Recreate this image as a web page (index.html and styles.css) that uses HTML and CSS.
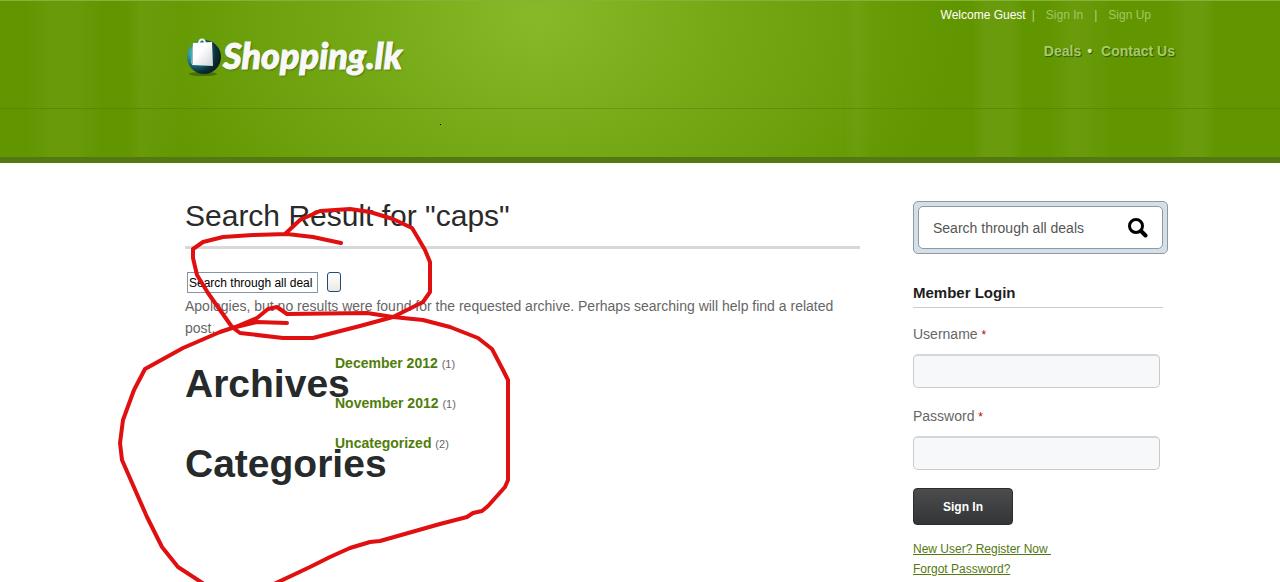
FILE: index.html
```html
<!DOCTYPE html>
<html lang="en">
<head>
    <meta charset="UTF-8">
    <meta name="viewport" content="width=device-width, initial-scale=1.0">
    <title>Shopping.lk - Search Result</title>
    <link rel="stylesheet" href="styles.css">
</head>
<body>
<header class="header">
    <div class="container header-inner">
        <a href="#" class="logo">
            <svg class="logo-icon" width="38" height="40" viewBox="0 0 38 40" aria-hidden="true">
                <defs>
                    <radialGradient id="ball" cx="0.25" cy="0.35" r="0.8">
                        <stop offset="0" stop-color="#5cc9c4"/>
                        <stop offset="0.4" stop-color="#1d7f8c"/>
                        <stop offset="0.75" stop-color="#0b3038"/>
                        <stop offset="1" stop-color="#051a1c"/>
                    </radialGradient>
                    <linearGradient id="bag" x1="0" y1="0" x2="1" y2="1">
                        <stop offset="0.4" stop-color="#ffffff"/>
                        <stop offset="1" stop-color="#cfd3d6"/>
                    </linearGradient>
                </defs>
                <ellipse cx="18" cy="37" rx="14" ry="2" fill="#2f5200" opacity="0.6"/>
                <circle cx="19" cy="20" r="17" fill="url(#ball)"/>
                <path d="M14 7 C14 1 20 1 20 7" fill="none" stroke="#e8f4f4" stroke-width="2"/>
                <path d="M8 6 L27 5 L28 29 L7 28 Z" fill="url(#bag)"/>
                <path d="M8 6 L6 26 L8 28 Z" fill="#9bb9bd"/>
            </svg>
            <span class="logo-text">Shopping.lk</span>
        </a>
        <div class="header-right">
            <div class="user-links">
                <span class="welcome">Welcome Guest</span><span>|</span>
                <a href="#">Sign In</a><span>|</span>
                <a href="#">Sign Up</a>
            </div>
            <nav class="nav">
                <a href="#">Deals</a><span class="dot">&bull;</span>
                <a href="#">Contact Us</a>
            </nav>
        </div>
    </div>
</header>

<div class="container page">
    <main class="content">
        <h1>Search Result for "caps"</h1>
        <form class="inline-search">
            <input type="text" value="Search through all deals" aria-label="Search">
            <button type="button" aria-label="Go"></button>
        </form>
        <p class="message">Apologies, but no results were found for the requested archive. Perhaps searching will help find a related post.</p>

        <section class="widget">
            <h2>Archives</h2>
            <ul>
                <li><a href="#">December 2012</a> <small>(1)</small></li>
                <li><a href="#">November 2012</a> <small>(1)</small></li>
            </ul>
        </section>
        <section class="widget">
            <h2>Categories</h2>
            <ul>
                <li><a href="#">Uncategorized</a> <small>(2)</small></li>
            </ul>
        </section>
    </main>

    <aside class="sidebar">
        <form class="search-box">
            <input type="text" value="Search through all deals" aria-label="Search deals">
            <button type="button" aria-label="Search">
                <svg width="20" height="20" viewBox="0 0 20 20">
                    <circle cx="8" cy="8" r="6.5" fill="none" stroke="#000" stroke-width="3"/>
                    <path d="M13 13 L17.5 17.5" stroke="#000" stroke-width="4" stroke-linecap="round"/>
                </svg>
            </button>
        </form>

        <form class="login">
            <h3>Member Login</h3>
            <label for="username">Username <span>*</span></label>
            <input type="text" id="username">
            <label for="password">Password <span>*</span></label>
            <input type="password" id="password">
            <button type="button">Sign In</button>
            <div class="login-links">
                <a href="#">New User? Register Now </a>
                <a href="#">Forgot Password?</a>
            </div>
        </form>
    </aside>
</div>

<!-- pen notes over the page -->
<svg class="marker" width="1280" height="582" viewBox="0 0 1280 582" aria-hidden="true">
    <path d="M285 234 L300 220 L320 211 L350 209 L370 212 L393 219 L412 228 L418 238 L425 250 L430 262 L430 292 L423 302 L393 317 L360 326 L313 338 L283 338 L240 333 L232 327 L208 293 L197 275 L193 258 L193 249 L203 242 L223 237 L253 235 L287 234 L313 237 L341 243"/>
    <path d="M287 323 L257 322 L232 328 L220 332 L183 348 L145 369 L134 390 L123 420 L120 443 L122 460 L147 517 L162 547 L178 567 L204 584"/>
    <path d="M274 584 L310 567 L330 557 L350 548 L370 542 L380 541 L440 524 L467 517 L473 513 L482 511 L488 506 L505 487 L508 480 L508 380 L503 370 L492 349 L478 338 L450 327 L423 320 L393 317 L367 313 L287 314 L277 307 L268 309 L257 318 L233 328"/>
    <rect x="440" y="124" width="1" height="1"/>
</svg>
</body>
</html>
```

FILE: styles.css
```css
* {
    box-sizing: border-box;
}

body {
    margin: 0;
    min-height: 100vh;
    position: relative;
    overflow-x: hidden;
    font-family: "Liberation Sans", Arial, sans-serif;
    font-size: 14px;
    color: #666;
    background: #fff;
}

.container {
    max-width: 1090px;
    margin: 0 auto;
    padding: 0 10px 0 90px;
}

/* header */
.header {
    min-height: 163px;
    border-top: 1px solid #86b236;
    border-bottom: 6px solid #537a12;
    background:
        linear-gradient(transparent 107px, rgba(50, 90, 0, 0.25) 107px, rgba(50, 90, 0, 0.25) 108px, transparent 108px),
        linear-gradient(90deg, transparent 2%, rgba(255, 255, 255, 0.04) 4%, rgba(255, 255, 255, 0.04) 6%, transparent 8%, transparent 10%, rgba(255, 255, 255, 0.04) 11%, transparent 14%, transparent 66%, rgba(255, 255, 255, 0.03) 67%, transparent 68%, transparent 76%, rgba(255, 255, 255, 0.05) 77%, rgba(255, 255, 255, 0.05) 79%, transparent 80%, transparent 82%, rgba(255, 255, 255, 0.05) 84%, transparent 87%, transparent 91%, rgba(255, 255, 255, 0.05) 93%, rgba(255, 255, 255, 0.05) 94%, transparent 95%),
        radial-gradient(ellipse 420px 330px at 42% 10%, #86ba28, rgba(120, 172, 26, 0.8) 45%, rgba(98, 150, 0, 0)),
        #629600;
}

.header-inner {
    display: flex;
    justify-content: space-between;
}

.logo {
    display: flex;
    margin: 36px 0 0;
    align-items: flex-start;
    text-decoration: none;
}

.logo-text {
    font-family: Lato, sans-serif;
    font-size: 36px;
    line-height: 36px;
    font-weight: 900;
    font-style: italic;
    color: #f8f8f8;
    -webkit-text-stroke: 1px #f8f8f8;
    text-shadow: 1px 1px 2px #3c5c08;
}

.user-links {
    display: flex;
    gap: 11px;
    padding: 6px 24px 0 0;
    justify-content: flex-end;
    font-size: 12px;
    line-height: 16px;
    color: #b5d280;
}

.user-links a {
    color: #a3c763;
    text-decoration: none;
}

.user-links .welcome {
    color: #fff;
    margin-right: -5px;
}

.nav {
    display: flex;
    gap: 9px;
    justify-content: flex-end;
    margin-top: 20px;
    font-size: 14px;
    line-height: 16px;
    font-weight: bold;
    text-shadow: 1px 1px 1px #345400;
}

.nav a {
    color: #a5cb68;
    text-decoration: none;
}

.nav .dot {
    color: #cfe6a8;
    margin-left: -3px;
}

/* search results */
.page {
    display: flex;
    justify-content: space-between;
    padding-top: 38px;
    padding-right: 17px;
}

.content {
    flex: 0 1 675px;
}

h1 {
    margin: 0 0 22px;
    padding-bottom: 16px;
    border-bottom: 3px solid #d8d8d8;
    font-size: 30px;
    line-height: 29px;
    font-weight: normal;
    color: #2a2a2a;
}

.inline-search {
    display: flex;
    gap: 9px;
    padding-left: 2px;
}

.inline-search input {
    width: 131px;
    height: 21px;
    margin-top: 1px;
    padding: 1px 4px 1px 1px;
    border: 1px solid #8296ab;
    font-family: inherit;
    font-size: 12px;
    color: #000;
}

.inline-search button {
    width: 14px;
    height: 20px;
    margin-top: 1px;
    padding: 0;
    border: 1px solid #1f4a7c;
    border-radius: 3px;
    background: linear-gradient(#fff, #ebe9e0);
}

.message {
    margin: 2px 0 4px;
    font-size: 14px;
    line-height: 22px;
}

/* the list sits beside the title and long titles run under it */
.widget {
    display: grid;
    grid-template-columns: 150px 1fr;
    height: 80px;
}

.widget h2 {
    margin: 0;
    font-size: 39px;
    line-height: 82px;
    color: #262a2a;
}

.widget ul {
    margin: 0;
    padding: 0;
    list-style: none;
    position: relative;
}

.widget li {
    height: 40px;
    line-height: 40px;
}

.widget a {
    font-size: 14px;
    font-weight: bold;
    color: #4f7d0a;
    text-decoration: none;
}

.widget small {
    font-size: 11px;
}

/* sidebar */
.sidebar {
    flex: 0 0 255px;
}

.search-box {
    display: flex;
    align-items: center;
    height: 53px;
    padding: 4px;
    border: 1px solid #8b9aa6;
    border-radius: 5px;
    background: #d6dfe5;
    position: relative;
}

.search-box input {
    width: 100%;
    height: 43px;
    padding: 0 45px 0 14px;
    border: 1px solid #8b9aa6;
    border-radius: 5px;
    font-family: inherit;
    font-size: 14px;
    color: #555;
}

.search-box button {
    position: absolute;
    right: 19px;
    top: 16px;
    padding: 0;
    border: 0;
    background: none;
    line-height: 0;
}

.login {
    width: 250px;
    padding-top: 30px;
}

.login h3 {
    margin: 0 0 16px;
    padding-bottom: 5px;
    border-bottom: 1px solid #ccc;
    font-size: 15px;
    line-height: 18px;
    color: #1d1d1d;
}

.login label {
    display: block;
    height: 20px;
    margin-bottom: 10px;
    font-size: 14px;
    line-height: 20px;
}

.login label span {
    font-size: 12px;
    color: #b00;
}

.login input {
    display: block;
    width: 247px;
    height: 34px;
    margin-bottom: 18px;
    padding: 0 8px;
    border: 1px solid #c8cacc;
    border-top: 2px solid #d4d6d8;
    border-radius: 5px;
    background: #f6f8f9;
}

.login button {
    width: 100px;
    height: 37px;
    border: 1px solid #2c2d2e;
    border-radius: 4px;
    background: linear-gradient(#4a4c4d, #343536);
    font-family: inherit;
    font-size: 12px;
    font-weight: bold;
    color: #fff;
}

.login-links {
    display: flex;
    flex-direction: column;
    align-items: flex-start;
    margin-top: 14px;
    font-size: 12px;
    line-height: 20px;
}

.login-links a {
    color: #55780f;
    white-space: pre;
}

/* pen drawing */
.marker {
    position: absolute;
    top: 0;
    left: calc(50% - 640px);
    pointer-events: none;
}

.marker path {
    fill: none;
    stroke: #e01010;
    stroke-width: 4;
    stroke-linecap: round;
    stroke-linejoin: round;
}
```
